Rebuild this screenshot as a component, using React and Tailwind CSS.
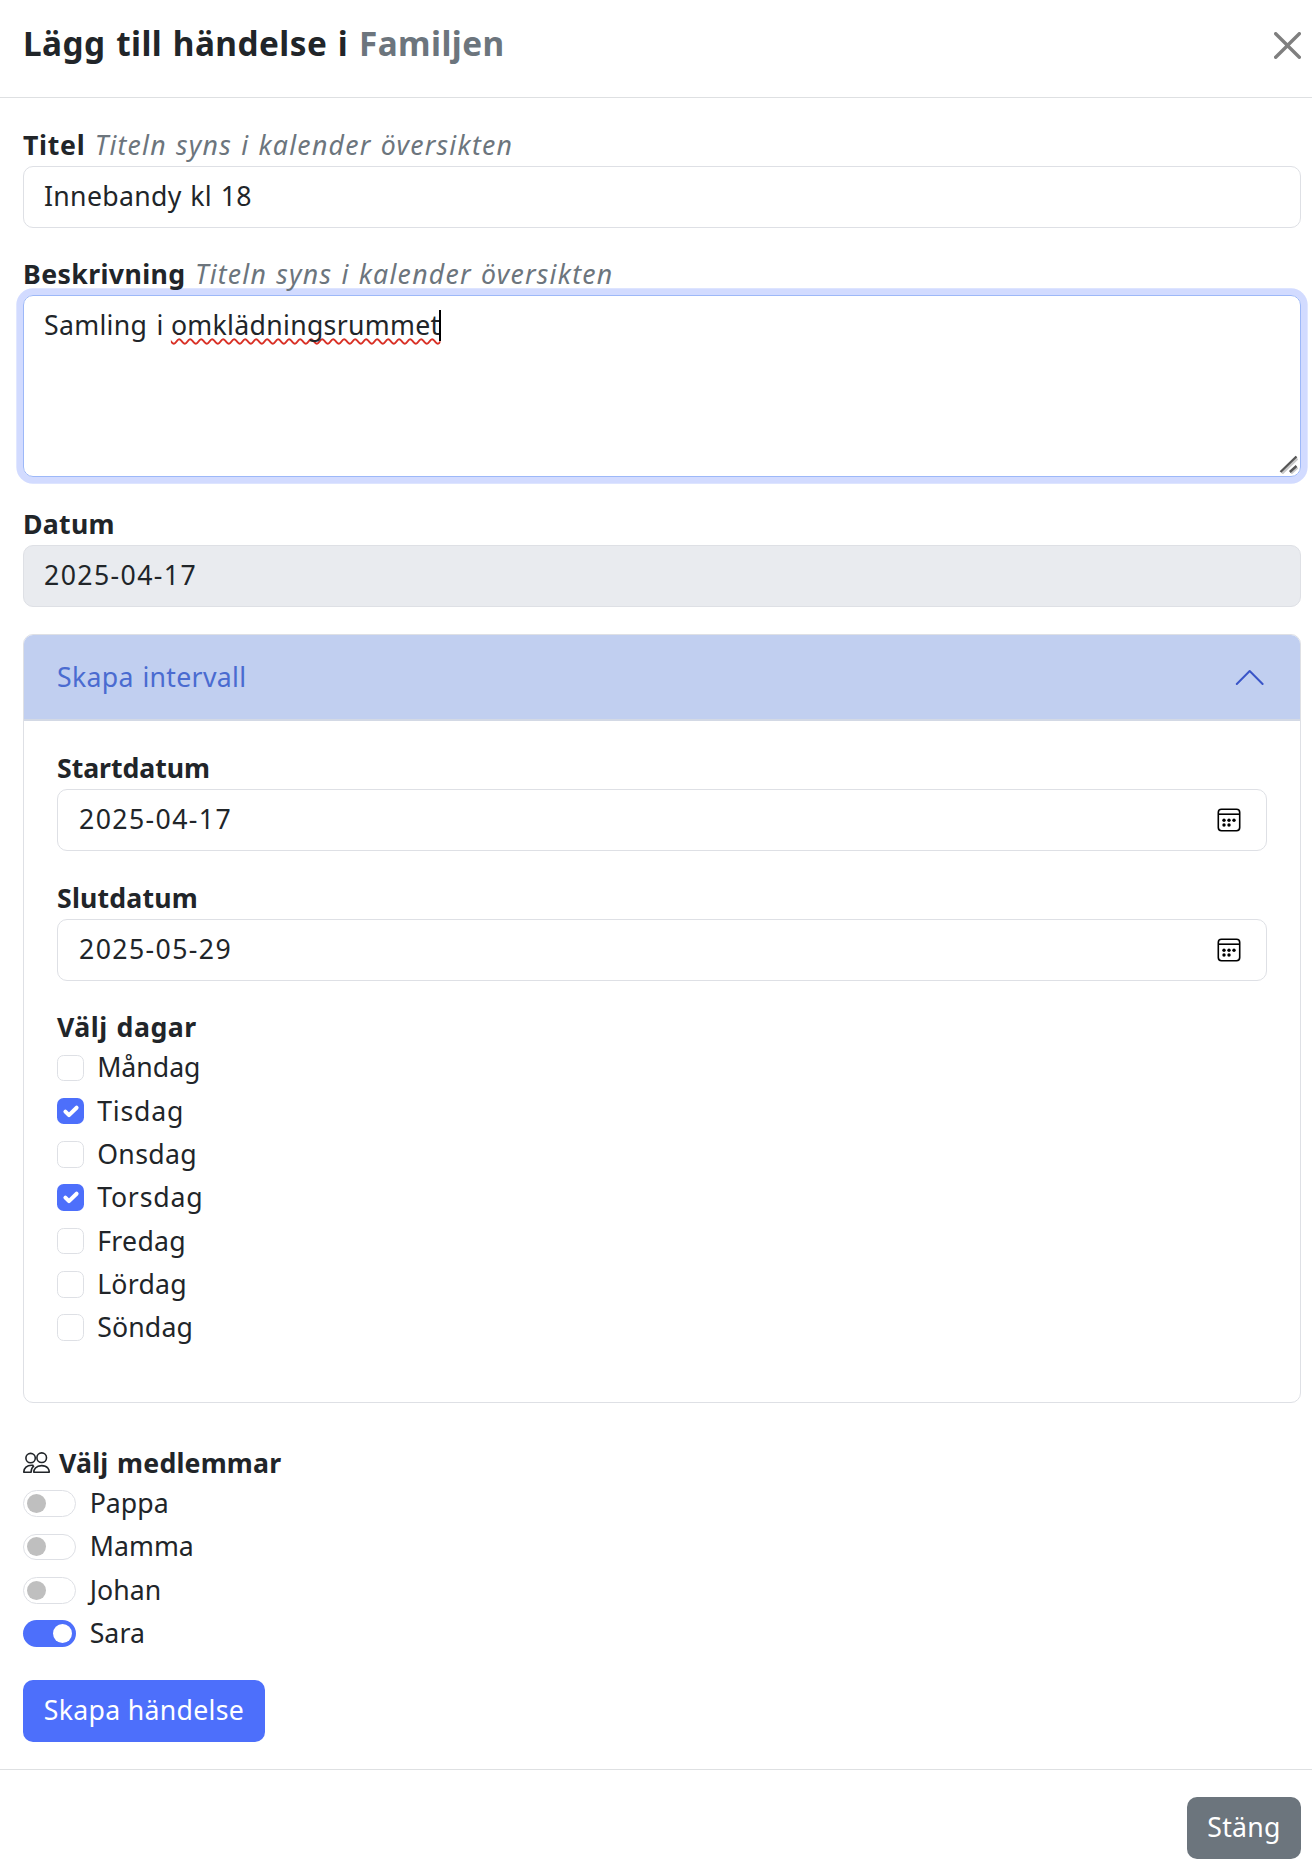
import React from "react";

const days = [
  ["Måndag", false, "tracking-[0px]"],
  ["Tisdag", true, "tracking-[0.8px]"],
  ["Onsdag", false, "tracking-[0.35px]"],
  ["Torsdag", true, "tracking-[0.8px]"],
  ["Fredag", false, "tracking-[0.3px]"],
  ["Lördag", false, "tracking-[0.25px]"],
  ["Söndag", false, "tracking-[0.15px]"],
];

const members = [
  ["Pappa", false],
  ["Mamma", false],
  ["Johan", false],
  ["Sara", true],
];

function Label({ children, hint, className = "" }) {
  return (
    <label className={"block h-10 whitespace-nowrap pb-0.5 leading-[38px] " + className}>
      <span className="font-bold">{children}</span>
      {hint && <span className="ml-[9.5px] italic tracking-[1.24px] [word-spacing:1px] text-[#6c757d]">{hint}</span>}
    </label>
  );
}

function Field({ children, className = "", icon = false }) {
  return (
    <div className={"flex h-[62px] items-center justify-between rounded-[10px] border border-[#dee0e5] pr-[25px] " + (icon ? "pl-[21px] " : "pl-5 ") + className}>
      <span className="pb-0.5 leading-[38px]">{children}</span>
      {icon && <CalendarIcon />}
    </div>
  );
}

function CalendarIcon() {
  return (
    <svg className="h-6 w-6" viewBox="0 0 24 24" fill="none" stroke="#000" strokeWidth="1.6">
      <rect x="1.3" y="1.3" width="21.4" height="21.4" rx="3.2" />
      <path d="M1.3 6.2h21.4" />
      <g fill="#000" stroke="none">
        <circle cx="7" cy="12.3" r="1.7" />
        <circle cx="12" cy="12.3" r="1.7" />
        <circle cx="17" cy="12.3" r="1.7" />
        <circle cx="7" cy="17" r="1.7" />
        <circle cx="12" cy="17" r="1.7" />
      </g>
    </svg>
  );
}

function Checkbox({ checked }) {
  if (!checked) return <span className="mt-[6.5px] size-[26.67px] rounded-[6.67px] border border-[#dee0e5]" />;
  return (
    <span className="mt-[6.5px] size-[26.67px] rounded-[6.67px] bg-[#4d6ffb]">
      <svg className="size-full" viewBox="0 0 20 20" fill="none" stroke="#fff" strokeWidth="3" strokeLinecap="round" strokeLinejoin="round">
        <path d="m6.300 10.200 2.700 2.700 5.700-5.600" />
      </svg>
    </span>
  );
}

function Switch({ on }) {
  return on ? (
    <span className="mt-[6.2px] flex h-[26.67px] w-[53px] items-center justify-end rounded-full bg-[#4d6ffb] pr-1">
      <span className="size-[19px] rounded-full bg-white" />
    </span>
  ) : (
    <span className="mt-[6.2px] flex h-[26.67px] w-[53px] items-center rounded-full border border-[#dee0e5] pl-[3px]">
      <span className="size-[19px] rounded-full bg-[#bfbfbf]" />
    </span>
  );
}

function PeopleIcon() {
  return (
    <svg className="mt-1.5 h-[27px] w-[27px]" viewBox="0 0 27 27" fill="none" stroke="#212529" strokeWidth="1.6" strokeLinejoin="round">
      <circle cx="7.6" cy="8.1" r="4.7" />
      <circle cx="18.7" cy="7.7" r="4.8" />
      <path d="M10.800 22.200c-.1-2.200 1.800-6.600 7.900-6.600s7.600 4.400 7.500 6.600z" />
      <path d="M10.300 15.400C3.500 14.500.7 18.800.8 22.200h7.300c0-2.700.8-4.800 2.900-6.600" />
    </svg>
  );
}

export default function App() {
  return (
    <div className="h-[1867px] w-[1312px] overflow-hidden bg-white font-['Noto_Sans',sans-serif] text-[26.67px] tracking-[0.3px] text-[#212529] [word-spacing:1.5px]">
      <header className="flex h-[98px] items-start justify-between border-b border-[#dee0e2] pl-[23px] pr-[11px] pt-[18px]">
        <h1 className="whitespace-nowrap text-[33.33px] font-bold leading-[50px] tracking-[0.45px]">
          Lägg till händelse i <span className="text-[#6c757d]">Familjen</span>
        </h1>
        <svg className="mt-[14px] h-[27px] w-[27px]" viewBox="0 0 16 16" fill="#7f7f7f">
          <path d="M.293.293a1 1 0 0 1 1.414 0L8 6.586 14.293.293a1 1 0 1 1 1.414 1.414L9.414 8l6.293 6.293a1 1 0 0 1-1.414 1.414L8 9.414l-6.293 6.293a1 1 0 0 1-1.414-1.414L6.586 8 .293 1.707a1 1 0 0 1 0-1.414" />
        </svg>
      </header>

      <main className="h-[1671px] pl-[23px] pr-[11px] pt-7">
        <Label hint="Titeln syns i kalender översikten" className="tracking-[0.7px]">Titel</Label>
        <Field>Innebandy kl 18</Field>

        <Label hint="Titeln syns i kalender översikten" className="mt-[27px] tracking-[0.4px]">Beskrivning</Label>
        <div className="flex h-[182px] justify-between rounded-[10px] border border-[#9db8f8] pl-5 pr-0.5 pt-[9px] shadow-[0_0_0_6.67px_#d2dbff]">
          <div className="flex h-10 leading-[40px]">
            <span className="whitespace-pre [word-spacing:2px]">Samling i </span>
            <span className="-ml-0.5 underline decoration-[#d93025] decoration-wavy decoration-[1.5px] underline-offset-[3px] [text-decoration-skip-ink:none]">omklädningsrummet</span>
            <span className="mt-[5px] -ml-px h-[31px] w-0.5 bg-black" />
          </div>
          <svg className="mb-0.5 h-[19px] w-[19px] self-end" viewBox="0 0 19 19" fill="none" strokeWidth="2.4">
            <path d="M3 18.500 18.500 3.500M12 18.500l6.500-6" stroke="#c9c9c9" />
            <path d="M1.500 17 17.500 1.500M10.800 17l6.700-6" stroke="#565656" />
          </svg>
        </div>

        <Label className="mt-7">Datum</Label>
        <Field className="bg-[#e9ebef] tracking-[1.4px]">2025-04-17</Field>

        <section className="mt-[27px] h-[769px] overflow-hidden rounded-[10px] border border-[#dee0e5]">
          <div className="flex h-[86px] items-center justify-between border-b-2 border-[#d3d9e5] bg-[#c1cff0] pl-[33px] pr-[36px] text-[#4a6bd0]">
            <span className="leading-[38px]">Skapa intervall</span>
            <svg className="h-[27px] w-[29px]" viewBox="0 0 29 27" fill="none" stroke="#3a55c8" strokeWidth="2" strokeLinecap="round" strokeLinejoin="round">
              <path d="m1.800 20 12.900-13L27.600 20" />
            </svg>
          </div>
          <div className="pl-[33px] pr-[33px] pt-7">
            <Label className="tracking-[-0.05px]">Startdatum</Label>
            <Field icon className="tracking-[1.4px]">2025-04-17</Field>
            <Label className="mt-7 tracking-[0.2px]">Slutdatum</Label>
            <Field icon className="tracking-[1.4px]">2025-05-29</Field>
            <Label className="mt-[27px] tracking-[0.5px]">Välj dagar</Label>
            {days.map(([name, checked, spacing]) => (
              <div key={name} className="flex h-[43.33px] items-start">
                <Checkbox checked={checked} />
                <span className={"ml-[13.5px] pt-[0.3px] leading-[38px] " + spacing}>{name}</span>
              </div>
            ))}
          </div>
        </section>

        <div className="mt-[41px] flex h-10 items-start">
          <PeopleIcon />
          <Label className="ml-[9px] tracking-[0.2px]">Välj medlemmar</Label>
        </div>
        {members.map(([name, on]) => (
          <div key={name} className="flex h-[43.33px] items-start tracking-[0.05px]">
            <Switch on={on} />
            <span className="ml-[13.7px] leading-[38px]">{name}</span>
          </div>
        ))}
        <button className="mt-[23px] flex h-[62px] w-[242px] items-center justify-center rounded-[10px] bg-[#4d6ffb] pb-0.5 text-white">Skapa händelse</button>
      </main>

      <footer className="flex justify-end border-t border-[#dee0e2] pr-[11px] pt-[27px]">
        <button className="flex h-[62px] w-[114px] items-center justify-center rounded-[10px] bg-[#6c757d] pb-0.5 text-white">Stäng</button>
      </footer>
    </div>
  );
}
